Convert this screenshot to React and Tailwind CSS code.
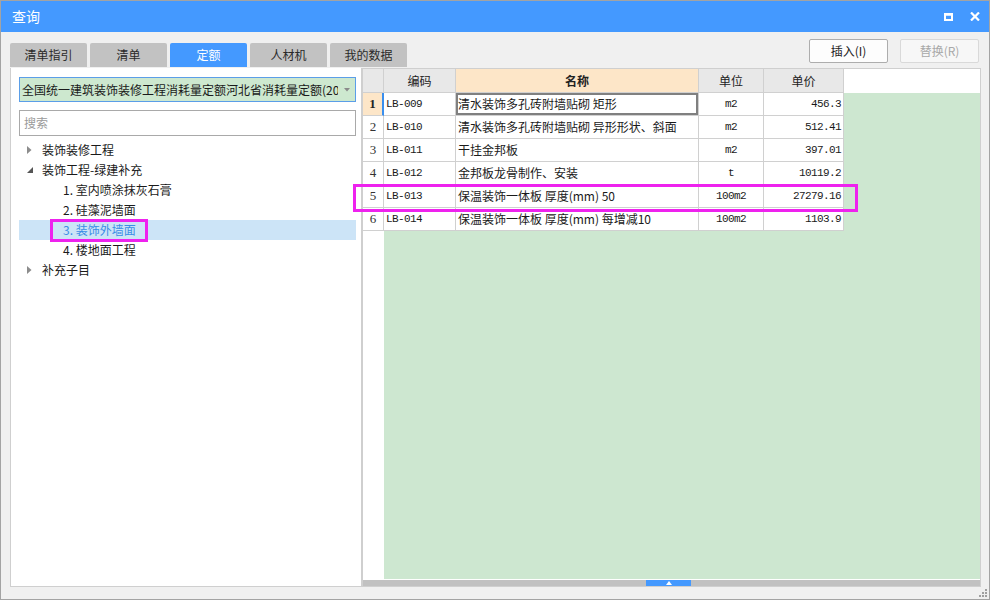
import React from "react";

const cjk = { fontFamily: '"Noto Sans CJK SC", "Noto Sans", sans-serif' };
const mono = { fontFamily: '"Liberation Mono", "Noto Sans CJK SC", monospace' };
const serif = { fontFamily: '"Liberation Serif", "Noto Sans CJK SC", serif' };

const rows = [
  ["1", "LB-009", "清水装饰多孔砖附墙贴砌 矩形", "m2", "456.3"],
  ["2", "LB-010", "清水装饰多孔砖附墙贴砌 异形形状、斜面", "m2", "512.41"],
  ["3", "LB-011", "干挂金邦板", "m2", "397.01"],
  ["4", "LB-012", "金邦板龙骨制作、安装", "t", "10119.2"],
  ["5", "LB-013", "保温装饰一体板 厚度(mm) 50", "100m2", "27279.16"],
  ["6", "LB-014", "保温装饰一体板 厚度(mm) 每增减10", "100m2", "1103.9"],
];

const tabs = ["清单指引", "清单", "定额", "人材机", "我的数据"];

function TriRight() {
  return (
    <svg width="5" height="8" viewBox="0 0 5 8">
      <path d="M0 0 L4.5 4 L0 8 Z" fill="#8c8c8c" />
    </svg>
  );
}
function TriDown() {
  return (
    <svg width="6" height="6" viewBox="0 0 6 6">
      <path d="M6 0 L6 6 L0 6 Z" fill="#555" />
    </svg>
  );
}

function TreeRow({ children, level, icon, selected }) {
  return (
    <div
      className={
        "flex items-center h-[20px] text-[12px] whitespace-nowrap " +
        (selected ? "bg-[#cce4f7] text-[#3a8ee6]" : "text-[#1a1a1a]")
      }
    >
      {level === 0 ? (
        <div className="w-[23px] pl-[8px] flex items-center">{icon === "down" ? <TriDown /> : <TriRight />}</div>
      ) : (
        <div className="w-[44px]" />
      )}
      <span>{children}</span>
    </div>
  );
}

export default function App() {
  return (
    <div
      className="relative w-[990px] h-[600px] border border-[#a3a3a3] bg-[#f0f0f0] flex flex-col overflow-hidden"
      style={cjk}
    >
      {/* title bar */}
      <div className="h-[31px] bg-[#4499ff] flex items-center justify-between pl-[11px] pr-[9px] shrink-0">
        <span className="text-white text-[14px]">查询</span>
        <div className="flex items-center gap-[17px]">
          <svg width="9" height="8" viewBox="0 0 9 8">
            <rect x="1" y="1.5" width="7" height="5.5" fill="none" stroke="#fff" strokeWidth="2" />
            <rect x="0" y="0" width="9" height="2.5" fill="#fff" />
          </svg>
          <svg width="10" height="9" viewBox="0 0 10 9">
            <path d="M1 0.5 L9 8.5 M9 0.5 L1 8.5" stroke="#fff" strokeWidth="2.2" />
          </svg>
        </div>
      </div>

      {/* body */}
      <div className="flex-1 flex flex-col pt-[7px] pl-[9px] pr-[8px] pb-[12px]">
        <div className="h-[28px] flex justify-between shrink-0">
          <div className="self-end flex gap-[3px]">
            {tabs.map((t) => (
              <div
                key={t}
                className={
                  "w-[77px] h-[24px] rounded-t-[2px] flex items-center justify-center text-[12px] " +
                  (t === "定额" ? "bg-[#4499ff] text-white" : "bg-[#c2c2c2] text-[#2a2a2a]")
                }
              >
                {t}
              </div>
            ))}
          </div>
          <div className="self-start flex gap-[12px] mr-[2px]">
            <div className="w-[79px] h-[24px] rounded-[2px] border border-[#adadad] bg-[#fdfdfd] flex items-center justify-center text-[12px] text-[#222]">
              插入(I)
            </div>
            <div className="w-[79px] h-[24px] rounded-[2px] border border-[#d9d9d9] bg-[#f7f7f7] flex items-center justify-center text-[12px] text-[#a8a8a8]">
              替换(R)
            </div>
          </div>
        </div>

        <div className="mt-px flex-1 flex">
          {/* left panel */}
          <div className="w-[352px] bg-white border-l border-r border-b border-[#cfcfcf] pt-[9px] pl-[8px] pr-[5px] flex flex-col">
            <div className="h-[25px] border border-[#5b9ee8] bg-[#cde8cf] flex items-center">
              <div className="flex-1 overflow-hidden whitespace-nowrap text-[12px] text-[#1a1a1a] pl-[2px]">
                全国统一建筑装饰装修工程消耗量定额河北省消耗量定额(2012)
              </div>
              <div className="w-[17px] flex items-center justify-center">
                <svg width="6" height="4" viewBox="0 0 6 4">
                  <path d="M0 0 L6 0 L3 3.5 Z" fill="#8a8a8a" />
                </svg>
              </div>
            </div>
            <div className="mt-[8px] h-[26px] border border-[#a9a9a9] flex items-center pl-[4px] text-[12px] text-[#9a9a9a]">
              搜索
            </div>
            <div className="mt-[4px] flex flex-col">
              <TreeRow level={0} icon="right">装饰装修工程</TreeRow>
              <TreeRow level={0} icon="down">装饰工程-绿建补充</TreeRow>
              <TreeRow level={1}>1. 室内喷涂抹灰石膏</TreeRow>
              <TreeRow level={1}>2. 硅藻泥墙面</TreeRow>
              <TreeRow level={1} selected>3. 装饰外墙面</TreeRow>
              <TreeRow level={1}>4. 楼地面工程</TreeRow>
              <TreeRow level={0} icon="right">补充子目</TreeRow>
            </div>
          </div>

          {/* right panel */}
          <div className="flex-1 bg-white border border-[#cfcfcf] flex flex-col">
            <div className="flex-1 flex flex-col">
              {/* header */}
              <div className="h-[24px] flex shrink-0 text-[12px] text-[#222]">
                <div className="w-[21px] bg-[#e8e8e8] border-r border-b border-[#d0d0d0]" />
                <div className="w-[72px] bg-[#e8e8e8] border-r border-b border-[#d0d0d0] flex items-center justify-center">编码</div>
                <div className="w-[243px] bg-[#fde6c8] border-r border-b border-[#d0d0d0] flex items-center justify-center font-bold">名称</div>
                <div className="w-[65px] bg-[#e8e8e8] border-r border-b border-[#d0d0d0] flex items-center justify-center">单位</div>
                <div className="w-[80px] bg-[#e8e8e8] border-r border-b border-[#d0d0d0] flex items-center justify-center">单价</div>
                <div className="flex-1 bg-white" />
              </div>
              {/* body */}
              <div className="flex-1 flex">
                <div className="w-[21px] bg-white flex flex-col">
                  {rows.map((r, i) => (
                    <div
                      key={r[0]}
                      className={
                        "h-[23px] border-b border-[#d0d0d0] flex items-center justify-center text-[13px] " +
                        (i === 0
                          ? "bg-[#fde6c8] font-bold border-r-2 border-r-[#3a8fef] text-[#222]"
                          : "border-r text-[#333]")
                      }
                      style={serif}
                    >
                      {r[0]}
                    </div>
                  ))}
                </div>
                <div className="flex-1 bg-[#cde7d0] flex flex-col">
                  {rows.map((r, i) => (
                    <div key={r[0]} className="h-[23px] w-[460px] bg-white flex text-[#1a1a1a]">
                      <div
                        className="w-[72px] border-r border-b border-[#d0d0d0] flex items-center pl-[2px] text-[11px] tracking-[-0.6px]"
                        style={mono}
                      >
                        {r[1]}
                      </div>
                      <div
                        className={
                          "w-[243px] border-r border-b border-[#d0d0d0] flex items-center pl-[2px] text-[12px] whitespace-nowrap overflow-hidden " +
                          (i === 0 ? "shadow-[inset_0_0_0_2px_#808080]" : "")
                        }
                      >
                        {r[2]}
                      </div>
                      <div
                        className="w-[65px] border-r border-b border-[#d0d0d0] flex items-center justify-center text-[11px] tracking-[-0.6px]"
                        style={mono}
                      >
                        {r[3]}
                      </div>
                      <div
                        className="w-[80px] border-r border-b border-[#d0d0d0] flex items-center justify-end pr-[2px] text-[11px] tracking-[-0.6px]"
                        style={mono}
                      >
                        {r[4]}
                      </div>
                    </div>
                  ))}
                </div>
              </div>
            </div>
            <div className="h-px bg-white" />
            <div className="h-[6px] bg-[#c1c1c1] flex">
              <div className="ml-[283px] w-[45px] h-full bg-[#4499ff] flex items-center justify-center">
                <svg width="6" height="4" viewBox="0 0 6 4">
                  <path d="M3 0 L6 4 L0 4 Z" fill="#fff" />
                </svg>
              </div>
            </div>
          </div>
        </div>
      </div>

      {/* annotation boxes */}
      <div className="absolute left-[49px] top-[218px] w-[98px] h-[23px] border-[3px] border-[#ee22ee]" />
      <div className="absolute left-[352px] top-[183px] w-[505px] h-[28px] border-[3px] border-[#ee22ee]" />

      {/* resize grip */}
      <div className="absolute right-[2px] bottom-[2px] w-[8px] h-[8px]">
        <svg width="8" height="8" viewBox="0 0 8 8">
          <rect x="6" y="0" width="2" height="2" fill="#a0a0a0" />
          <rect x="3" y="3" width="2" height="2" fill="#a0a0a0" />
          <rect x="6" y="3" width="2" height="2" fill="#a0a0a0" />
          <rect x="0" y="6" width="2" height="2" fill="#a0a0a0" />
          <rect x="3" y="6" width="2" height="2" fill="#a0a0a0" />
          <rect x="6" y="6" width="2" height="2" fill="#a0a0a0" />
        </svg>
      </div>
    </div>
  );
}
